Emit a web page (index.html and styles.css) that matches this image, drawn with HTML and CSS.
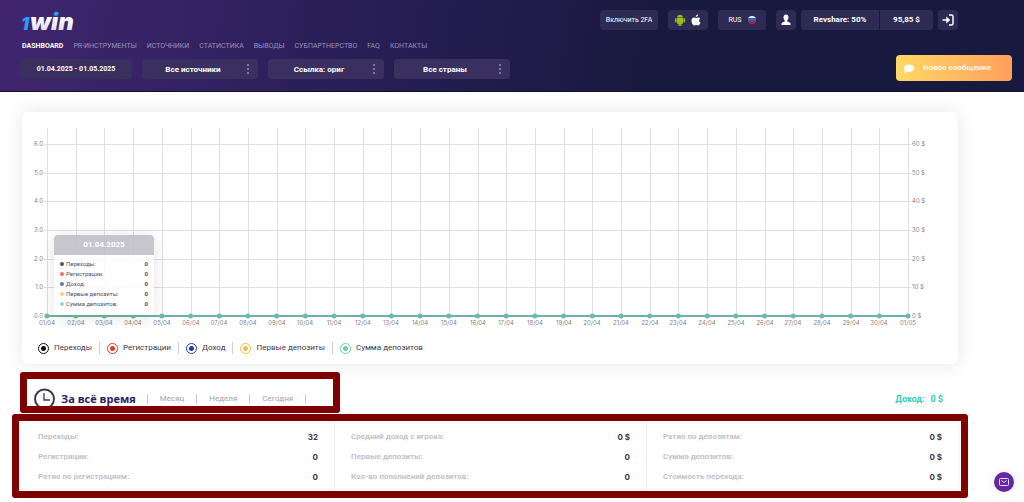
FILE: index.html
```html
<!DOCTYPE html>
<html lang="ru">
<head>
    <meta charset="UTF-8">
    <meta name="viewport" content="width=device-width, initial-scale=1.0">
    <title>1win Partners</title>
    <link rel="stylesheet" href="styles.css">
</head>
<body>
    <header class="header">
        <div class="top-row">
            <a href="#" class="logo" aria-label="1win">
                <svg width="64" height="32" viewBox="0 0 64 32">
                    <defs>
                        <linearGradient id="logoWin" gradientUnits="userSpaceOnUse" x1="0" y1="0" x2="0" y2="30">
                            <stop offset="0.41" stop-color="#2f9bf5"/>
                            <stop offset="0.41" stop-color="#ffffff"/>
                            <stop offset="1" stop-color="#d9d7e6"/>
                        </linearGradient>
                    </defs>
                    <text class="logo-one" x="3" y="26">1</text>
                    <text class="logo-win" x="12" y="26" fill="url(#logoWin)">win</text>
                </svg>
            </a>
            <div class="top-actions">
                <button class="chip chip-2fa">Включить 2FA</button>
                <button class="chip chip-apps" aria-label="Android / iOS">
                    <svg width="12" height="12" viewBox="0 0 24 24" fill="#9dbf16">
                        <path d="M6 8h12v10a1.500 1.500 0 0 1-1.500 1.500H15V23a1.300 1.300 0 0 1-2.600 0v-3.500h-.8V23A1.300 1.300 0 0 1 9 23v-3.500H7.500A1.500 1.500 0 0 1 6 18z"/>
                        <path d="M6 7a6 5 0 0 1 3-4.300L8 1l.6-.4 1 1.700a7 7 0 0 1 4.800 0l1-1.700.6.400-1 1.700A6 5 0 0 1 18 7z"/>
                        <rect x="2" y="8" width="3" height="9" rx="1.500"/>
                        <rect x="19" y="8" width="3" height="9" rx="1.500"/>
                    </svg>
                    <svg width="12" height="12" viewBox="0 0 24 24" fill="#ffffff">
                        <path d="M16 1c.2 2.600-2 5-4.300 5C11.400 3.500 13.600 1.300 16 1zM21 17.500c-1 2.500-2.800 5.500-4.800 5.500-1.500 0-2-1-3.800-1s-2.400 1-3.800 1C5.800 23 3 17.600 3 13.500 3 9.300 5.600 7 8.200 7c1.700 0 3 1.100 4.100 1.100S14.900 7 16.800 7c1.300 0 2.800.7 3.700 2-3.300 1.900-2.800 6.900.5 8.500z"/>
                    </svg>
                </button>
                <button class="chip chip-lang">
                    RUS
                    <svg width="8" height="8" viewBox="0 0 8 8">
                        <clipPath id="flag"><circle cx="4" cy="4" r="4"/></clipPath>
                        <g clip-path="url(#flag)">
                            <rect width="8" height="3" fill="#f2f2f7"/>
                            <rect y="2" width="8" height="3" fill="#2c65c8"/>
                            <rect y="5" width="8" height="3" fill="#b91d3c"/>
                        </g>
                    </svg>
                </button>
                <button class="chip chip-icon" aria-label="Профиль">
                    <svg width="10" height="12" viewBox="0 0 20 24" fill="#ffffff">
                        <path d="M10 1c3 0 5 2.300 5 5.500 0 2.500-1 4.500-2.500 6v2c0 1 6 2 6.500 4.500V22H1v-3c.5-2.500 6.500-3.500 6.500-4.500v-2C6 11 5 9 5 6.500 5 3.300 7 1 10 1z"/>
                    </svg>
                </button>
                <div class="balance">
                    <span class="balance-plan">Revshare: 50%</span>
                    <span class="balance-sum">95,85 $</span>
                </div>
                <button class="chip chip-icon" aria-label="Выход">
                    <svg width="12" height="12" viewBox="0 0 24 24" fill="none" stroke="#ffffff" stroke-width="3">
                        <path d="M14 2h5a3 3 0 0 1 3 3v14a3 3 0 0 1-3 3h-5"/>
                        <path d="M1 12h10"/>
                        <path d="M9 6l7 6-7 6z" fill="#ffffff" stroke-width="1"/>
                    </svg>
                </button>
            </div>
        </div>

        <nav class="nav">
            <a href="#" class="active">DASHBOARD</a>
            <a href="#">PR-ИНСТРУМЕНТЫ</a>
            <a href="#">ИСТОЧНИКИ</a>
            <a href="#">СТАТИСТИКА</a>
            <a href="#">ВЫВОДЫ</a>
            <a href="#">СУБПАРТНЕРСТВО</a>
            <a href="#">FAQ</a>
            <a href="#">КОНТАКТЫ</a>
        </nav>

        <div class="filters">
            <input class="filter filter-date" type="text" value="01.04.2025 - 01.05.2025" aria-label="Период" readonly>
            <div class="filter-box">
                <select class="filter" aria-label="Источники"><option>Все источники</option></select>
                <svg class="dots" width="2" height="10" viewBox="0 0 2 10" fill="#d5d2e2"><circle cx="1" cy="1" r="0.8"/><circle cx="1" cy="5" r="0.8"/><circle cx="1" cy="9" r="0.8"/></svg>
            </div>
            <div class="filter-box">
                <select class="filter" aria-label="Ссылка"><option>Ссылка: ориг</option></select>
                <svg class="dots" width="2" height="10" viewBox="0 0 2 10" fill="#d5d2e2"><circle cx="1" cy="1" r="0.8"/><circle cx="1" cy="5" r="0.8"/><circle cx="1" cy="9" r="0.8"/></svg>
            </div>
            <div class="filter-box">
                <select class="filter" aria-label="Страны"><option>Все страны</option></select>
                <svg class="dots" width="2" height="10" viewBox="0 0 2 10" fill="#d5d2e2"><circle cx="1" cy="1" r="0.8"/><circle cx="1" cy="5" r="0.8"/><circle cx="1" cy="9" r="0.8"/></svg>
            </div>
        </div>

        <button class="message-btn">
            <svg width="10" height="9" viewBox="0 0 20 18" fill="#ffffff">
                <path d="M10 1c5.500 0 10 3 10 7.500S15.500 16 10 16c-1.300 0-2.500-.2-3.600-.5C5 16.700 3 17.500 0 17.500c1.300-1.200 2-2.500 2.200-4C.8 12.200 0 10.500 0 8.500 0 4 4.500 1 10 1z"/>
            </svg>
            <span>Новое сообщение</span>
        </button>
    </header>

    <main class="content">
        <section class="chart-card">
            <svg class="chart" id="chart" viewBox="0 0 936 216"></svg>

            <div class="tooltip">
                <div class="tooltip-title">01.04.2025</div>
                <ul class="tooltip-list">
                    <li class="black"><span>Переходы:</span><b>0</b></li>
                    <li class="red"><span>Регистрации:</span><b>0</b></li>
                    <li class="blue"><span>Доход:</span><b>0</b></li>
                    <li class="yellow"><span>Первые депозиты:</span><b>0</b></li>
                    <li class="green"><span>Сумма депозитов:</span><b>0</b></li>
                </ul>
            </div>

            <div class="legend">
                <label class="black"><input type="checkbox" checked>Переходы</label>
                <label class="red"><input type="checkbox" checked>Регистрации</label>
                <label class="blue"><input type="checkbox" checked>Доход</label>
                <label class="yellow"><input type="checkbox" checked>Первые депозиты</label>
                <label class="green"><input type="checkbox" checked>Сумма депозитов</label>
            </div>
        </section>

        <section class="period">
            <div class="period-tabs">
                <svg class="clock" width="22" height="22" viewBox="0 0 22 22" fill="none" stroke="#3b3751" stroke-width="2">
                    <circle cx="10.500" cy="11" r="9.500"/>
                    <path d="M10 5v7h6" stroke-width="1.300"/>
                </svg>
                <button class="tab tab-active">За всё время</button>
                <button class="tab">Месяц</button>
                <button class="tab">Неделя</button>
                <button class="tab">Сегодня</button>
            </div>
            <div class="income">Доход:<span>0 $</span></div>
            <div class="frame frame-period"></div>
        </section>

        <section class="stats">
            <dl class="stats-col">
                <div><dt>Переходы:</dt><dd>32</dd></div>
                <div><dt>Регистрации:</dt><dd>0</dd></div>
                <div><dt>Ратио по регистрациям:</dt><dd>0</dd></div>
            </dl>
            <dl class="stats-col">
                <div><dt>Средний доход с игрока:</dt><dd>0 $</dd></div>
                <div><dt>Первые депозиты:</dt><dd>0</dd></div>
                <div><dt>Кол-во пополнений депозитов:</dt><dd>0</dd></div>
            </dl>
            <dl class="stats-col">
                <div><dt>Ратио по депозитам:</dt><dd>0 $</dd></div>
                <div><dt>Сумма депозитов:</dt><dd>0 $</dd></div>
                <div><dt>Стоимость перехода:</dt><dd>0 $</dd></div>
            </dl>
            <div class="frame frame-stats"></div>
        </section>
    </main>

    <button class="mail-btn" aria-label="Написать">
        <svg width="10" height="8" viewBox="0 0 20 16" fill="none" stroke="#e9dcf7" stroke-width="2">
            <rect x="1" y="1" width="18" height="14" rx="2"/>
            <path d="M5 5l5 4 5-4"/>
        </svg>
    </button>

    <script src="script.js"></script>
</body>
</html>
```
FILE: styles.css
```css
* {
    margin: 0;
    padding: 0;
    box-sizing: border-box;
}

body {
    position: relative;
    min-height: 100vh;
    background: #ffffff;
    color: #3b3751;
    font-family: Roboto, "Liberation Sans", sans-serif;
    font-size: 8px;
    line-height: 10px;
}

button, input, select {
    font: inherit;
    color: inherit;
    border: none;
    background: none;
}

button, select {
    cursor: pointer;
}

a {
    color: inherit;
    text-decoration: none;
}

/* header */
.header {
    position: relative;
    padding: 8px 66px 12px 20px;
    background: linear-gradient(100deg, #41266f 0%, #2a1f59 32%, #18193f 64%, #17193e 100%);
    border-bottom: 1px solid #100f2c;
    color: #ffffff;
}

.top-row {
    display: flex;
    justify-content: space-between;
    align-items: center;
    height: 24px;
}

.logo {
    margin-left: -2px;
}

.logo svg {
    display: block;
}

.logo-one, .logo-win {
    font-family: Inter, sans-serif;
    font-weight: 900;
    font-style: italic;
}

.logo-one {
    font-size: 18px;
    fill: #2f9bf5;
}

.logo-win {
    font-size: 24px;
}

.top-actions {
    display: flex;
    gap: 10px;
}

.chip {
    display: flex;
    align-items: center;
    justify-content: center;
    height: 20px;
    border-radius: 4px;
    background: #2d2b53;
    font-size: 7px;
}

.chip-2fa {
    width: 58px;
}

.chip-apps {
    width: 40px;
    gap: 4px;
}

.chip-lang {
    width: 48px;
    gap: 6px;
}

.chip-icon {
    width: 20px;
}

.balance {
    display: flex;
    margin: 0 -5px;
    height: 20px;
    line-height: 20px;
    border-radius: 4px;
    background: #2d2b53;
    font-weight: 700;
    text-align: center;
}

.balance-plan {
    width: 79px;
    border-right: 1px solid #17193e;
}

.balance-sum {
    width: 53px;
}

.nav {
    display: flex;
    gap: 10px;
    margin: 9px 0 8px 2px;
    color: #9a90bb;
    font-size: 7px;
}

.nav .active {
    color: #ffffff;
    font-weight: 700;
}

.filters {
    display: flex;
    gap: 10px;
}

.filter-box {
    position: relative;
    width: 116px;
}

.filter {
    display: block;
    width: 100%;
    height: 20px;
    border-radius: 4px;
    background: #3a3060;
    font-weight: 700;
    text-align: center;
    text-align-last: center;
    appearance: none;
    padding: 1px 14px 0 0;
}

.filter-date {
    width: 112px;
    padding: 0;
    font-size: 7px;
}

.dots {
    position: absolute;
    right: 9px;
    top: 5px;
    pointer-events: none;
}

.message-btn {
    position: absolute;
    right: 12px;
    bottom: 10px;
    display: flex;
    align-items: center;
    gap: 9px;
    width: 116px;
    height: 26px;
    padding-left: 8px;
    border-radius: 4px;
    background: linear-gradient(90deg, #ffd966, #ff9f5c);
    font-weight: 700;
    color: #fff6e4;
}

.content {
    margin: 20px 66px 0 22px;
}

/* chart */
.chart-card {
    position: relative;
    border-radius: 6px;
    background: #ffffff;
    box-shadow: 0 0 20px rgba(0, 0, 0, 0.1);
}

.chart {
    display: block;
    width: 100%;
    height: auto;
}

.chart text {
    font-family: Inter, sans-serif;
    font-size: 6px;
    fill: #858585;
}

.chart .grid {
    stroke: #e0e0e0;
    stroke-width: 1;
}

.chart .line {
    stroke: #6fb3a8;
    stroke-width: 2;
}

.chart .point {
    fill: #6cbba8;
}

.black { --mark: #111111; }
.red { --mark: #df3d2c; }
.blue { --mark: #263aa8; }
.yellow { --mark: #ecc04a; }
.green { --mark: #6fceb0; }

.tooltip {
    position: absolute;
    left: 32px;
    top: 123px;
    width: 100px;
    border-radius: 4px;
    background: #ffffff;
    box-shadow: 0 2px 16px rgba(0, 0, 0, 0.12);
    overflow: hidden;
    opacity: 0.9;
}

.tooltip-title {
    line-height: 20px;
    background: #c1c0ca;
    color: #ffffff;
    font-weight: 700;
    text-align: center;
}

.tooltip-list {
    list-style: none;
    padding: 4px 6px 6px;
    font-size: 6px;
}

.tooltip-list li {
    display: flex;
    align-items: center;
}

.tooltip-list li::before {
    content: '';
    width: 4px;
    height: 4px;
    margin-right: 2px;
    border-radius: 50%;
    background: var(--mark);
    opacity: 0.8;
}

.tooltip-list b {
    margin-left: auto;
}

.legend {
    display: flex;
    padding: 14px 16px 10px;
}

.legend label {
    display: flex;
    align-items: center;
    gap: 5px;
    height: 12px;
}

.legend label + label {
    margin-left: 7px;
    padding-left: 7px;
    border-left: 1px solid #cfcfd6;
}

.legend input {
    width: 11px;
    height: 11px;
    border: 1px solid var(--mark);
    border-radius: 50%;
    background: radial-gradient(circle, var(--mark) 2px, #ffffff 3px);
    appearance: none;
}

/* period */
.period {
    position: relative;
    display: flex;
    justify-content: space-between;
    align-items: center;
    height: 22px;
    margin-top: 24px;
    padding: 0 15px 0 12px;
}

.period-tabs {
    display: flex;
    align-items: center;
}

.tab {
    padding: 0 12px;
    border-right: 1px solid #cccccc;
    color: #a3a3a8;
}

.tab-active {
    position: relative;
    padding: 0 11px 0 5px;
    color: #2f1b5e;
    font-family: "Open Sans", sans-serif;
    font-size: 11px;
    font-weight: 700;
}

.tab-active::after {
    content: '';
    position: absolute;
    left: 4px;
    right: 10px;
    bottom: -4px;
    height: 2px;
    background: #5a1f86;
}

.income {
    color: #2fcdb2;
    font-size: 9px;
    font-weight: 700;
}

.income span {
    margin-left: 6px;
}

/* stats */
.stats {
    position: relative;
    display: grid;
    grid-template-columns: repeat(3, 1fr);
    margin-top: 11px;
    border-radius: 4px;
    box-shadow: 0 0 16px rgba(0, 0, 0, 0.06);
}

.stats-col {
    padding: 6px 16px 4px;
    font-weight: 700;
}

.stats-col + .stats-col {
    border-left: 1px solid #ededf0;
}

.stats-col div {
    display: flex;
    justify-content: space-between;
    line-height: 20px;
}

.stats-col dt {
    color: #c4c4c8;
}

.stats-col dd {
    font-family: Inter, sans-serif;
}

.frame {
    position: absolute;
    border: 7px solid #7f0000;
    border-radius: 3px;
    pointer-events: none;
}

.frame-period {
    left: -2px;
    top: -16px;
    width: 320px;
    height: 41px;
}

.frame-stats {
    inset: -7px -10px;
}

.mail-btn {
    position: absolute;
    right: 10px;
    bottom: 10px;
    display: flex;
    align-items: center;
    justify-content: center;
    width: 20px;
    height: 20px;
    border-radius: 50%;
    background: #6327a3;
    box-shadow: 0 0 12px rgba(0, 0, 0, 0.1);
}
```
FILE: script.js
```js
const chart = document.getElementById('chart');
const left = 25;
const right = 886;
const top0 = 16;
const bottom = 204;
const days = 31;
const stepX = (right - left) / (days - 1);
const stepY = 28.7;

function add(tag, attrs, text) {
    const el = document.createElementNS('http://www.w3.org/2000/svg', tag);
    for (const key in attrs) {
        el.setAttribute(key, attrs[key]);
    }
    if (text) {
        el.textContent = text;
    }
    chart.appendChild(el);
}

// horizontal grid and both scales
for (let i = 0; i <= 6; i++) {
    const y = Math.round(bottom - i * stepY);
    add('line', { class: 'grid', x1: left - 3, y1: y + 0.5, x2: right + 3, y2: y + 0.5 });
    add('text', { x: left - 4, y: y + 2, 'text-anchor': 'end' }, i + '.0');
    add('text', { x: right + 4, y: y + 2 }, (i ? i * 10 : 0) + ' $');
}

// vertical grid and dates
for (let i = 0; i < days; i++) {
    const x = Math.round(left + i * stepX);
    const date = i < 30 ? String(i + 1).padStart(2, '0') + '/04' : '01/05';
    add('line', { class: 'grid', x1: x + 0.5, y1: top0, x2: x + 0.5, y2: bottom });
    add('text', { x: x, y: bottom + 9, 'text-anchor': 'middle' }, date);
}

add('line', { class: 'line', x1: left, y1: bottom, x2: right, y2: bottom });
for (let i = 0; i < days; i++) {
    add('circle', { class: 'point', cx: left + i * stepX, cy: bottom, r: 2.5 });
}
```
